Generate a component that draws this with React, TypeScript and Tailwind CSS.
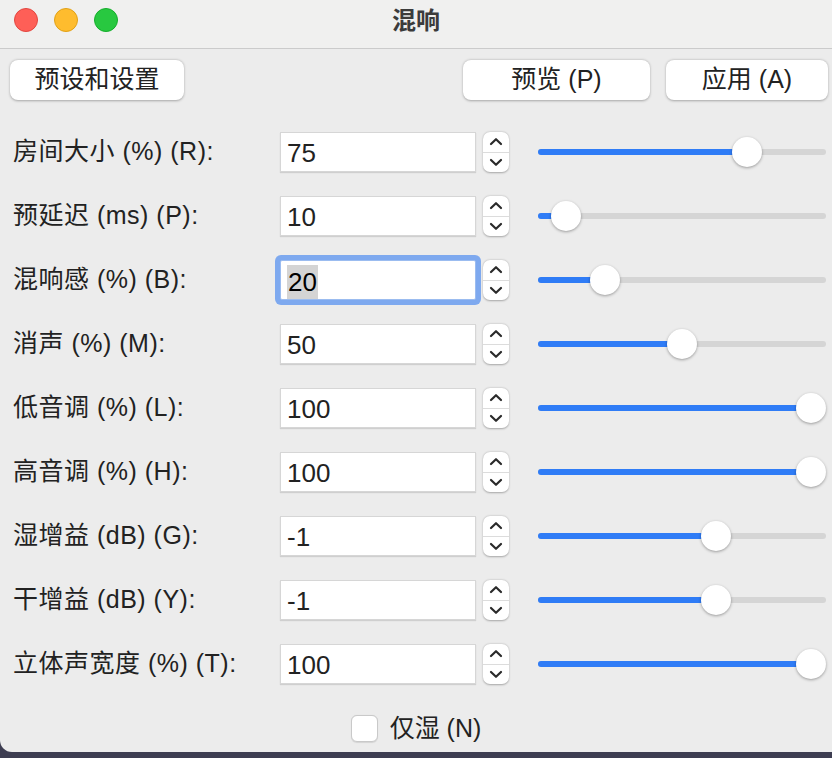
import React from 'react';

interface Row {
  label: string;
  value: string;
  min: number;
  max: number;
  focused?: boolean;
}

const rows: Row[] = [
  { label: '房间大小 (%) (R):', value: '75', min: 0, max: 100 },
  { label: '预延迟 (ms) (P):', value: '10', min: 0, max: 200 },
  { label: '混响感 (%) (B):', value: '20', min: 0, max: 100, focused: true },
  { label: '消声 (%) (M):', value: '50', min: 0, max: 100 },
  { label: '低音调 (%) (L):', value: '100', min: 0, max: 100 },
  { label: '高音调 (%) (H):', value: '100', min: 0, max: 100 },
  { label: '湿增益 (dB) (G):', value: '-1', min: -20, max: 10 },
  { label: '干增益 (dB) (Y):', value: '-1', min: -20, max: 10 },
  { label: '立体声宽度 (%) (T):', value: '100', min: 0, max: 100 },
];

const font = { fontFamily: '"Liberation Sans", "Noto Sans CJK SC", sans-serif' };

function Stepper() {
  return (
    <div className="ml-[7px] w-[26px] h-10 rounded-[7px] bg-white shadow-[0_0.5px_2px_rgba(0,0,0,0.3)] flex flex-col">
      <div className="flex-1 flex items-center justify-center border-b border-[#dcdcdc]">
        <svg width="14" height="9" viewBox="0 0 14 9">
          <path d="M2 7 L7 2.2 L12 7" fill="none" stroke="#2a2a2a" strokeWidth="2.2" strokeLinecap="round" strokeLinejoin="round" />
        </svg>
      </div>
      <div className="flex-1 flex items-center justify-center">
        <svg width="14" height="9" viewBox="0 0 14 9">
          <path d="M2 2 L7 6.8 L12 2" fill="none" stroke="#2a2a2a" strokeWidth="2.2" strokeLinecap="round" strokeLinejoin="round" />
        </svg>
      </div>
    </div>
  );
}

function Slider({ pct }: { pct: number }) {
  const center = 15 + pct * 258;
  return (
    <div className="ml-[29px] w-[288px] h-[30px] relative flex items-center">
      <div className="w-full h-[6px] rounded-full bg-[#d5d5d5] overflow-hidden">
        <div className="h-full bg-[#2f7cf6]" style={{ width: `${center}px` }} />
      </div>
      <div
        className="absolute top-0 w-[30px] h-[30px] rounded-full bg-white shadow-[0_1px_3px_rgba(0,0,0,0.35)]"
        style={{ left: `${center - 15}px` }}
      />
    </div>
  );
}

export default function App() {
  return (
    <div className="w-[832px] h-[758px] bg-[#3d3d51] overflow-hidden" style={font}>
      <div className="w-[840px] h-[752px] bg-[#ececec] rounded-bl-[12px] flex flex-col">
        {/* Title bar */}
        <div className="h-[49px] bg-[#f0f0ef] border-b border-[#cbcbcb] relative flex items-center justify-center">
          <div className="absolute left-[14px] top-[8px] flex gap-4">
            <div className="w-6 h-6 rounded-full bg-[#fe5f57] border border-[#e2463f]" />
            <div className="w-6 h-6 rounded-full bg-[#febc2e] border border-[#e1a116]" />
            <div className="w-6 h-6 rounded-full bg-[#28c840] border border-[#14ae2b]" />
          </div>
          <span className="text-[24px] font-semibold text-[#3b3b3b] -mt-[6px] -ml-[8px]">混响</span>
        </div>

        {/* Buttons */}
        <div className="flex items-center pt-[11px] pl-[10px]">
          <button className="w-[174px] h-10 rounded-[8px] bg-white shadow-[0_0.5px_2.5px_rgba(0,0,0,0.3)] text-[25px] text-[#222]">
            预设和设置
          </button>
          <button className="ml-[279px] w-[187px] h-10 rounded-[8px] bg-white shadow-[0_0.5px_2.5px_rgba(0,0,0,0.3)] text-[25px] text-[#222]">
            预览 (P)
          </button>
          <button className="ml-[16px] w-[162px] h-10 rounded-[8px] bg-white shadow-[0_0.5px_2.5px_rgba(0,0,0,0.3)] text-[25px] text-[#222]">
            应用 (A)
          </button>
        </div>

        {/* Rows */}
        <div className="flex flex-col gap-6 mt-8">
          {rows.map((r) => {
            const pct = (Number(r.value) - r.min) / (r.max - r.min);
            return (
              <div key={r.label} className="flex items-center h-10">
                <div className="w-[280px] pl-[13px] text-[25px] text-[#222] whitespace-nowrap tracking-[0.5px]">{r.label}</div>
                {r.focused ? (
                  <div className="w-[196px] h-10 bg-white border border-[#9bbcf0] ring-[5px] ring-[#7ea9ef] rounded-[2px] flex items-center pl-[6px] pt-[3px] text-[26px] text-black">
                    <span className="bg-[#d4d4d4] px-[1px] leading-[34px]">{r.value}</span>
                  </div>
                ) : (
                  <div className="w-[196px] h-10 bg-white border border-[#d6d6d6] shadow-[0_1px_1px_rgba(0,0,0,0.12)] flex items-center pl-[6px] pt-[3px] text-[26px] text-[#222]">
                    {r.value}
                  </div>
                )}
                <Stepper />
                <Slider pct={pct} />
              </div>
            );
          })}
        </div>

        {/* Checkbox */}
        <div className="flex items-center justify-center mt-[26px] pr-[8px]">
          <div className="w-[27px] h-[27px] rounded-[6px] bg-white border border-[#c9c9c9] shadow-[0_0.5px_1px_rgba(0,0,0,0.1)]" />
          <span className="ml-[12px] text-[25px] text-[#222]">仅湿 (N)</span>
        </div>
      </div>
    </div>
  );
}
